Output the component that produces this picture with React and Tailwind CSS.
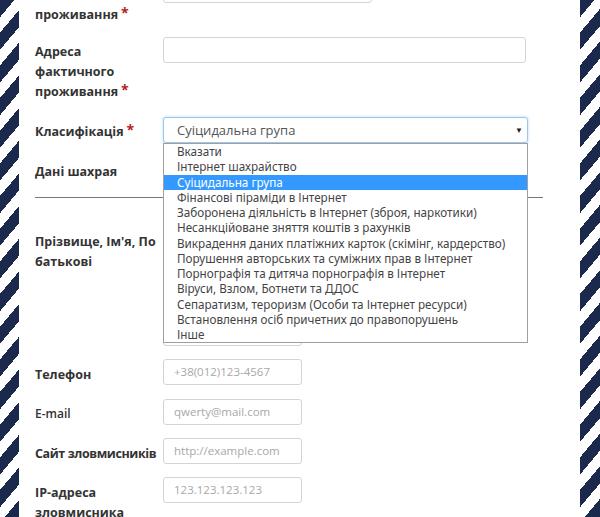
import React from "react";

const options = [
    "Вказати",
    "Інтернет шахрайство",
    "Суіцидальна група",
    "Фінансові піраміди в Інтернет",
    "Заборонена діяльність в Інтернет (зброя, наркотики)",
    "Несанкційоване зняття коштів з рахунків",
    "Викрадення даних платіжних карток (скімінг, кардерство)",
    "Порушення авторських та суміжних прав в Інтернет",
    "Порнографія та дитяча порнографія в Інтернет",
    "Віруси, Взлом, Ботнети та ДДОС",
    "Сепаратизм, тероризм (Особи та Інтернет ресурси)",
    "Встановлення осіб причетних до правопорушень",
    "Інше",
];

const stripes =
    "bg-[repeating-linear-gradient(130deg,#1b2a4c_0px,#1b2a4c_11px,#ffffff_11px,#ffffff_21px)]";

function Star() {
    return <sup className="ml-[3px] text-[14px] font-bold text-[#b41d1d] relative top-[-1px]">*</sup>;
}

function Field({ placeholder = "", className = "w-[139px]" }) {
    return (
        <div
            className={`h-[26px] rounded-[3px] border border-[#d4d4d4] bg-white pl-[10px] text-[11.5px] font-normal leading-[24px] text-[#a8a8a8] ${className}`}
        >
            {placeholder}
        </div>
    );
}

export default function App() {
    return (
        <div className="flex h-[517px] w-[600px] overflow-hidden bg-white font-['Open_Sans',sans-serif]">
            <div className={`w-[19px] shrink-0 ${stripes}`} />

            <div className="flex-1 pl-[16px] text-[12.5px] font-bold leading-[20px] text-[#333]">
                {/* проживання (обрізано зверху) */}
                <div className="flex h-[24px]">
                    <div className="w-[128px] pt-[5px]">
                        проживання<Star />
                    </div>
                    <Field className="-mt-[23px] w-[209px]" />
                </div>

                {/* Адреса фактичного проживання */}
                <div className="mt-[13px] flex">
                    <div className="w-[128px] pt-[5px]">
                        Адреса
                        <br />
                        фактичного
                        <br />
                        проживання<Star />
                    </div>
                    <Field className="w-[363px]" />
                </div>

                {/* Класифікація */}
                <div className="mt-[15px] flex">
                    <div className="w-[128px] pt-[5px]">
                        Класифікація<Star />
                    </div>
                    <div className="relative">
                        <div className="flex h-[26px] w-[365px] items-center justify-between rounded-[3px] border border-[#9cc6ea] bg-white pl-[13px] pr-[4px] font-normal text-[13px] text-[#555] shadow-[0_0_3px_rgba(102,175,233,0.5)]">
                            <span>Суіцидальна група</span>
                            <span className="text-[8px] text-[#222]">▼</span>
                        </div>
                        {/* Відкритий список */}
                        <div className="absolute left-0 top-full z-10 w-[365px] border border-[#a0a0a0] bg-white font-['Noto_Sans',sans-serif] text-[11.7px] font-normal text-[#444]">
                            {options.map((o) => (
                                <div
                                    key={o}
                                    className={`h-[15.25px] whitespace-nowrap pl-[13px] leading-[15.25px] ${o === "Суіцидальна група" ? "bg-[#3399ff] text-white" : ""}`}
                                >
                                    {o}
                                </div>
                            ))}
                        </div>
                    </div>
                </div>

                {/* Дані шахрая */}
                <div className="mt-[19px]">Дані шахрая</div>
                <div className="mt-[15px] w-[508px] border-t border-[#777]" />

                {/* ПІБ */}
                <div className="mt-[30px] flex">
                    <div className="w-[128px] pt-[4px]">
                        Прізвище, Ім'я, По
                        <br />
                        батькові
                    </div>
                    <div className="flex flex-col gap-[20px]">
                        <Field />
                        <Field />
                        <Field />
                    </div>
                </div>

                {/* Телефон */}
                <div className="mt-[13px] flex">
                    <div className="w-[128px] pt-[6px]">Телефон</div>
                    <Field placeholder="+38(012)123-4567" />
                </div>

                {/* E-mail */}
                <div className="mt-[14px] flex">
                    <div className="w-[128px] pt-[5px] text-[12px] font-semibold">E-mail</div>
                    <Field placeholder="qwerty@mail.com" />
                </div>

                {/* Сайт */}
                <div className="mt-[13px] flex">
                    <div className="w-[128px] pt-[6px] tracking-[-0.4px]">Сайт зловмисників</div>
                    <Field placeholder="http://example.com" />
                </div>

                {/* IP */}
                <div className="mt-[13px] flex">
                    <div className="w-[128px] pt-[6px]">
                        IP-адреса
                        <br />
                        зловмисника
                    </div>
                    <Field placeholder="123.123.123.123" />
                </div>
            </div>

            <div className={`w-[20px] shrink-0 ${stripes}`} />
        </div>
    );
}
